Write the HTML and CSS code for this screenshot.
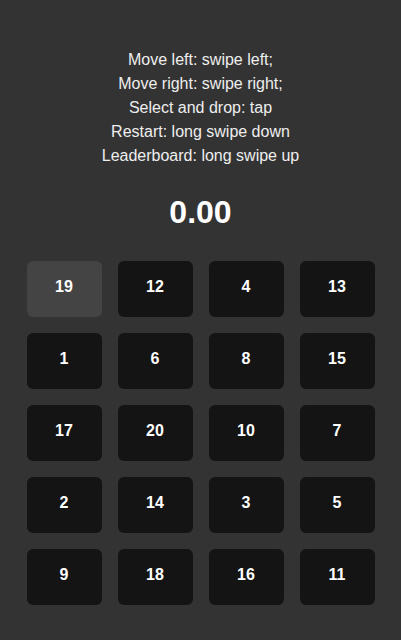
FILE: index.html
```html
<!DOCTYPE html>
<html>
<head>
<meta charset="utf-8">
<link rel="stylesheet" href="styles.css">
</head>
<body>
<div class="app">
  <div class="help">
    <div>Move left: swipe left;</div>
    <div>Move right: swipe right;</div>
    <div>Select and drop: tap</div>
    <div>Restart: long swipe down</div>
    <div>Leaderboard: long swipe up</div>
  </div>
  <div class="score">0.00</div>
  <div class="grid">
    <div class="tile sel">19</div><div class="tile">12</div><div class="tile">4</div><div class="tile">13</div>
    <div class="tile">1</div><div class="tile">6</div><div class="tile">8</div><div class="tile">15</div>
    <div class="tile">17</div><div class="tile">20</div><div class="tile">10</div><div class="tile">7</div>
    <div class="tile">2</div><div class="tile">14</div><div class="tile">3</div><div class="tile">5</div>
    <div class="tile">9</div><div class="tile">18</div><div class="tile">16</div><div class="tile">11</div>
  </div>
</div>
</body>
</html>
```
FILE: styles.css
```css
html, body {
  margin: 0;
  background: #333333;
  height: 100%;
}
.app {
  font-family: "Liberation Sans", Arial, sans-serif;
  color: #eeeeee;
  padding-top: 48px;
  display: flex;
  flex-direction: column;
  align-items: center;
}
.help {
  font-size: 16px;
  line-height: 24px;
  text-align: center;
}
.score {
  font-size: 32px;
  font-weight: bold;
  color: #ffffff;
  line-height: 36px;
  margin-top: 26px;
}
.grid {
  margin-top: 31px;
  display: grid;
  grid-template-columns: repeat(4, 75px);
  grid-auto-rows: 56px;
  gap: 16px;
}
.tile {
  background: #141414;
  border-radius: 6px;
  display: flex;
  align-items: center;
  justify-content: center;
  padding-bottom: 4px;
  box-sizing: border-box;
  font-weight: bold;
  font-size: 16px;
  color: #ffffff;
}
.tile.sel {
  background: #444444;
}
```
